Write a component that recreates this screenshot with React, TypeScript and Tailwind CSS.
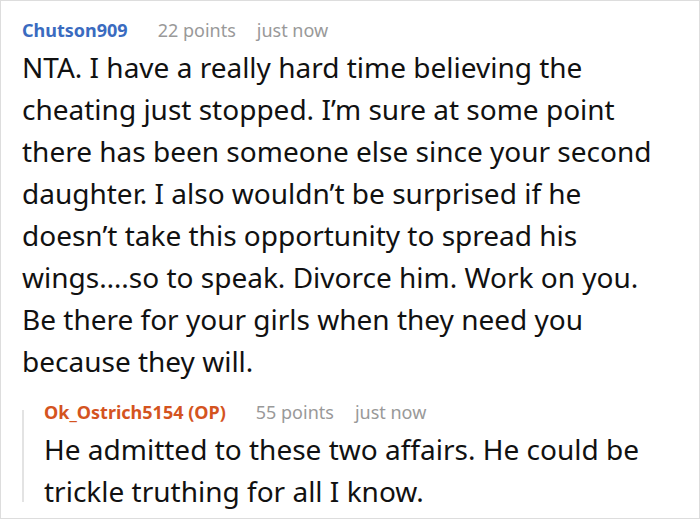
const font = { fontFamily: '"Noto Sans", "Open Sans", sans-serif' };

function Meta({ name, points, nameClass }: { name: string; points: string; nameClass: string }) {
  return (
    <div className="flex items-baseline text-[18px] leading-[24px]">
      <span className={`font-bold ${nameClass}`}>{name}</span>
      <span className="ml-[30px] text-[#999999]">{points}</span>
      <span className="ml-[21px] text-[#999999]">just now</span>
    </div>
  );
}

export default function App() {
  return (
    <div style={font} className="w-[700px] h-[520px] bg-white">
      <div className="h-[519px] border border-[#dddddd] pt-[17px] pl-[21px] pr-[34px] overflow-hidden">
        <Meta name="Chutson909" points="22 points" nameClass="text-[#3a6bc0]" />
        <p className="mt-1 text-[28px] leading-[42px] text-[#111111]">
          NTA. I have a really hard time believing the cheating just stopped. I’m sure at some point
          there has been someone else since your second daughter. I also wouldn’t be surprised if he
          doesn’t take this opportunity to spread his wings….so to speak. Divorce him. Work on you.
          Be there for your girls when they need you because they will.
        </p>
        <div className="mt-[18px] flex">
          <div className="w-[2px] my-[10px] bg-[#e3e3e3]" />
          <div className="pl-5 flex-1">
            <Meta name="Ok_Ostrich5154 (OP)" points="55 points" nameClass="text-[#d4541f]" />
            <p className="mt-1 text-[28px] leading-[42px] text-[#111111]">
              He admitted to these two affairs. He could be trickle truthing for all I know.
            </p>
          </div>
        </div>
      </div>
    </div>
  );
}
